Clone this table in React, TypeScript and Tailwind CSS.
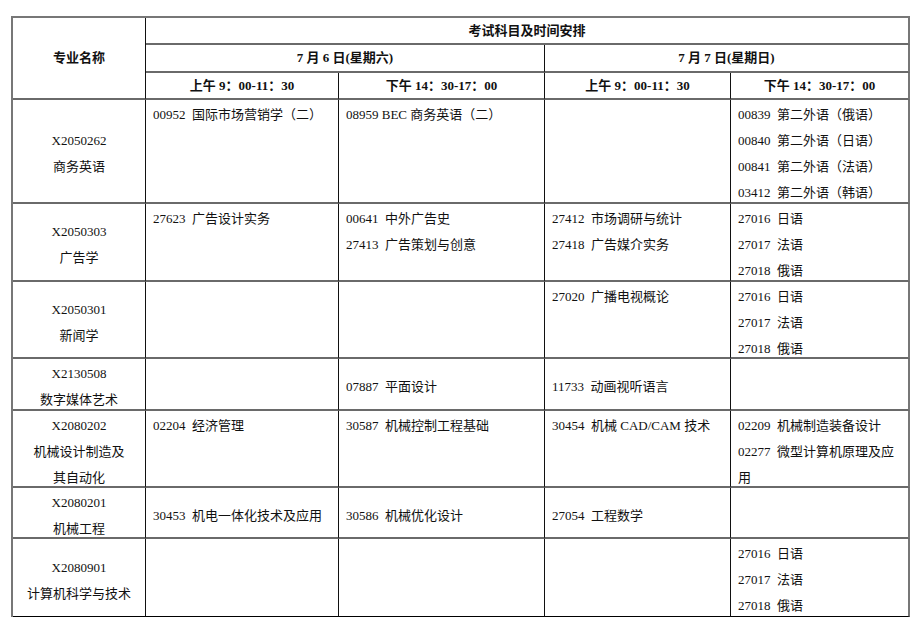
const font = { fontFamily: '"Liberation Serif", "Noto Sans CJK SC", serif' };

type Row = {
  code: string;
  name: string[];
  cells: string[][];
  middle?: boolean;
};

const rows: Row[] = [
  {
    code: 'X2050262',
    name: ['商务英语'],
    cells: [
      ['00952  国际市场营销学（二）'],
      ['08959 BEC 商务英语（二）'],
      [],
      ['00839  第二外语（俄语）', '00840  第二外语（日语）', '00841  第二外语（法语）', '03412  第二外语（韩语）'],
    ],
  },
  {
    code: 'X2050303',
    name: ['广告学'],
    cells: [
      ['27623  广告设计实务'],
      ['00641  中外广告史', '27413  广告策划与创意'],
      ['27412  市场调研与统计', '27418  广告媒介实务'],
      ['27016  日语', '27017  法语', '27018  俄语'],
    ],
  },
  {
    code: 'X2050301',
    name: ['新闻学'],
    cells: [[], [], ['27020  广播电视概论'], ['27016  日语', '27017  法语', '27018  俄语']],
  },
  {
    code: 'X2130508',
    name: ['数字媒体艺术'],
    middle: true,
    cells: [[], ['07887  平面设计'], ['11733  动画视听语言'], []],
  },
  {
    code: 'X2080202',
    name: ['机械设计制造及', '其自动化'],
    cells: [
      ['02204  经济管理'],
      ['30587  机械控制工程基础'],
      ['30454  机械 CAD/CAM 技术'],
      ['02209  机械制造装备设计', '02277  微型计算机原理及应', '用'],
    ],
  },
  {
    code: 'X2080201',
    name: ['机械工程'],
    middle: true,
    cells: [['30453  机电一体化技术及应用'], ['30586  机械优化设计'], ['27054  工程数学'], []],
  },
  {
    code: 'X2080901',
    name: ['计算机科学与技术'],
    cells: [[], [], [], ['27016  日语', '27017  法语', '27018  俄语']],
  },
];

const cellBase = 'border-r border-r-[#111] border-b-2 border-b-[#6a6a6a]';

export default function App() {
  return (
    <div className="w-[918px] h-[628px] bg-white text-[#111] text-[13px] leading-[26px]" style={font}>
      <div className="pt-[16px] pl-[11px]">
        <div className="grid w-[899px] grid-cols-[133px_193px_206px_186px_179px] grid-rows-[27px_28px_27px_104px_78px_77px_52px_77px_51px_78px] border-l-2 border-t-2 border-l-[#777] border-t-[#777]">
          <div className={`${cellBase} row-span-3 flex items-center justify-center font-bold`}>专业名称</div>
          <div className={`col-span-4 border-b-2 border-b-[#6a6a6a] border-r-2 border-r-[#777] flex items-center justify-center font-bold`}>
            考试科目及时间安排
          </div>
          <div className={`${cellBase} col-span-2 flex items-center justify-center font-bold`}>7 月 6 日(星期六)</div>
          <div className={`col-span-2 border-b-2 border-b-[#6a6a6a] border-r-2 border-r-[#777] flex items-center justify-center font-bold`}>
            7 月 7 日(星期日)
          </div>
          <div className={`${cellBase} flex items-center justify-center font-bold`}>上午 9：00-11：30</div>
          <div className={`${cellBase} flex items-center justify-center font-bold`}>下午 14：30-17：00</div>
          <div className={`${cellBase} flex items-center justify-center font-bold`}>上午 9：00-11：30</div>
          <div className={`border-b-2 border-b-[#6a6a6a] border-r-2 border-r-[#777] flex items-center justify-center font-bold`}>
            下午 14：30-17：00
          </div>

          {rows.map((r, ri) => {
            const last = ri === rows.length - 1;
            const bottom = last ? 'border-b border-b-black' : 'border-b-2 border-b-[#6a6a6a]';
            return [
              <div key={`${ri}-n`} className={`border-r border-r-[#111] ${bottom} flex flex-col items-center justify-center pt-[6px]`}>
                <div>{r.code}</div>
                {r.name.map((n) => (
                  <div key={n}>{n}</div>
                ))}
              </div>,
              ...r.cells.map((c, ci) => (
                <div
                  key={`${ri}-${ci}`}
                  className={`${ci === 3 ? 'border-r-2 border-r-[#777]' : 'border-r border-r-[#111]'} ${bottom} pl-[7px] flex flex-col whitespace-pre ${
                    r.middle ? 'justify-center pt-[6px]' : 'pt-[2px]'
                  }`}
                >
                  {c.map((line, li) => (
                    <div key={li}>{line}</div>
                  ))}
                </div>
              )),
            ];
          })}
        </div>
      </div>
    </div>
  );
}
